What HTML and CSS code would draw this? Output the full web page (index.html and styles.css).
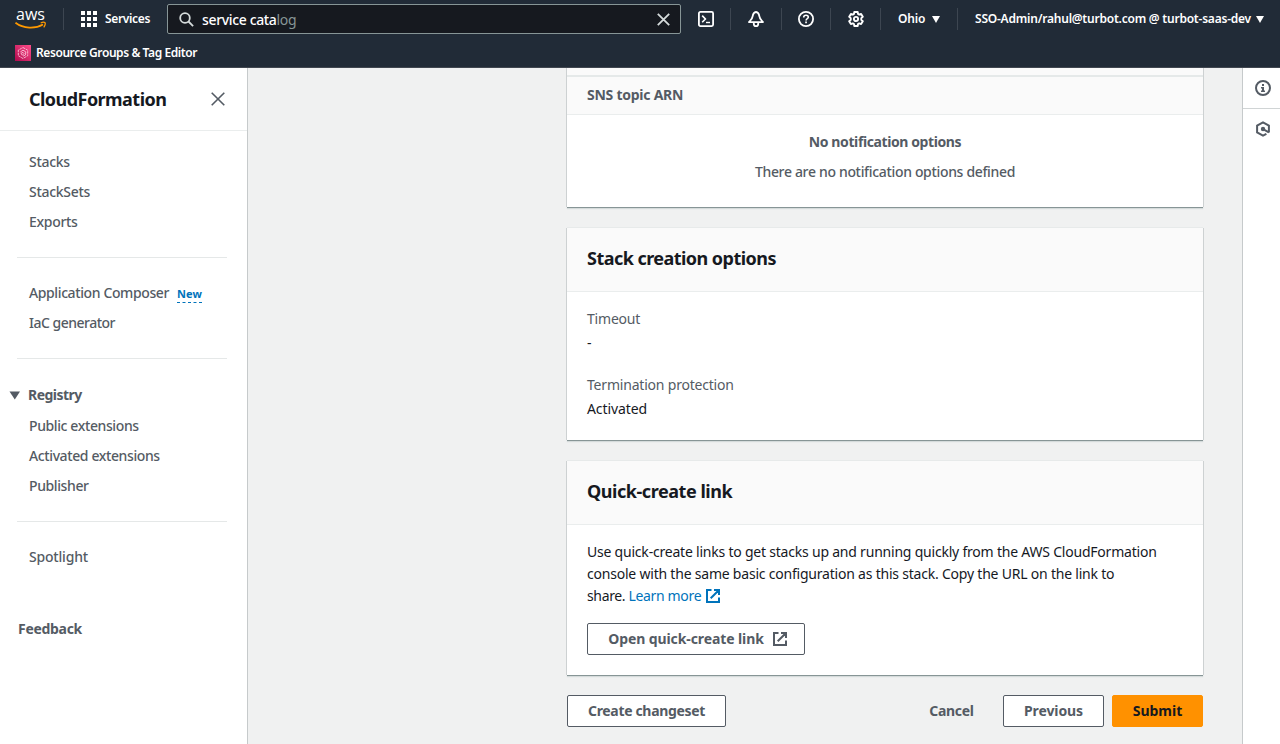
FILE: index.html
```html
<!DOCTYPE html>
<html lang="en">
<head>
<meta charset="utf-8">
<title>CloudFormation</title>
<link rel="stylesheet" href="styles.css">
</head>
<body>
<header class="topbar">
  <div class="topbar-row">
    <svg class="aws-logo" width="32" height="32" viewBox="0 0 32 32">
      <text class="aws-word" x="1" y="17" textLength="29" lengthAdjust="spacingAndGlyphs">aws</text>
      <path d="M.5 19.700C8.500 25.800 20 26.200 28 21.500" fill="none" stroke="#f90" stroke-width="1.700"/>
      <path d="M25.700 20c1.400-.7 3.700-.8 4.400-.2.5.7-.2 3.400-1.400 4.600" fill="none" stroke="#f90" stroke-width="1.300"/>
    </svg>
    <span class="sep sep-logo"></span>
    <svg class="grid-icon" width="16" height="16" fill="#fff"><path d="M0 0h4v4H0zM6 0h4v4H6zM12 0h4v4h-4zM0 6h4v4H0zM6 6h4v4H6zM12 6h4v4h-4zM0 12h4v4H0zM6 12h4v4H6zM12 12h4v4h-4z"/></svg>
    <span class="services">Services</span>
    <div class="search">
      <svg class="search-icon" width="15" height="15" viewBox="0 0 15 15" fill="none" stroke="#d5dbdb" stroke-width="1.8"><circle cx="6" cy="6" r="4.8"/><path d="M9.5 9.5l4.6 4.6"/></svg>
      <span class="query">service cata<span class="hint">log</span></span>
      <svg width="13" height="13" viewBox="0 0 13 13" stroke="#d5dbdb" stroke-width="1.8"><path d="M.8.8l11.4 11.4M12.2.8L.8 12.2"/></svg>
    </div>
    <div class="tool"><svg width="16" height="16" viewBox="0 0 16 16" fill="none" stroke="#fff" stroke-width="1.8"><rect x=".9" y=".9" width="14.2" height="14.2" rx="1.5"/><path d="M4.2 4.6L7.4 8l-3.2 3.3" stroke-width="1.6"/><path d="M8 11.5h4" stroke-width="1.4"/></svg></div>
    <div class="tool tool-bell"><svg width="16" height="16" viewBox="0 0 16 16" fill="none" stroke="#fff" stroke-width="1.8" stroke-linejoin="round"><path d="M8 1C6 1.2 5 3 4.6 5.4 4.3 8 2.5 9.2 1 11.1h14c-1.5-1.9-3.3-3.1-3.6-5.7C11 3 10 1.200 8 1z"/><path d="M5.800 11.500v1.400q0 2.200 2.200 2.200t2.200-2.200v-1.400"/></svg></div>
    <div class="tool tool-help"><svg width="16" height="16" viewBox="0 0 16 16" fill="none" stroke="#fff" stroke-width="1.8"><circle cx="8" cy="8" r="7.1"/><path d="M5.700 6.500q0-2.200 2.300-2.200t2.300 1.900c0 1.500-2.200 1.300-2.200 3.200" stroke-width="1.6"/><path d="M7.200 10.500h1.700v1.700H7.200z" fill="#fff" stroke="none"/></svg></div>
    <div class="tool"><svg width="16" height="16" viewBox="0 0 16 16" fill="none" stroke="#fff" stroke-width="1.9" stroke-linejoin="round"><path d="M6.300 1h3.400l.3 1.900 1.200.7 1.900-.7 1.700 2.900-1.500 1.300v1.800l1.500 1.300-1.700 2.900-1.900-.7-1.200.7L9.700 15H6.300L6 13.100l-1.200-.7-1.900.7-1.700-2.900 1.500-1.300V7.100L1.200 5.800l1.700-2.900 1.900.7L6 2.900z"/><circle cx="8" cy="8" r="2.100"/></svg></div>
    <div class="region"><span>Ohio</span><svg width="8" height="7" fill="#fff"><path d="M0 0h8L4 7z"/></svg></div>
    <div class="account"><span>SSO-Admin/rahul@turbot.com @ turbot-saas-dev</span><svg width="8" height="7" fill="#fff"><path d="M0 0h8L4 7z"/></svg></div>
  </div>
  <div class="favorites">
    <svg width="16" height="16" viewBox="0 0 16 16"><defs><linearGradient id="pink" x1="0" y1="1" x2="1" y2="0"><stop offset="0" stop-color="#b0084d"/><stop offset="1" stop-color="#ff4f8b"/></linearGradient></defs><path fill="url(#pink)" d="M0 0h16v16H0z"/><g fill="none" stroke="#ffd7e6" stroke-width=".8"><path d="M8 2.500l4.700 2.700v5.500L8 13.500l-4.700-2.800V5.200z" stroke-dasharray="2.500 .7"/><path d="M5.300 7L8 5.200l2.800 1.700-.3 3L8 11.200M6 8.300l2-.9 1 1.200-1.700 1.700z"/></g></svg>
    <span>Resource Groups &amp; Tag Editor</span>
  </div>
</header>
<div class="page">
  <nav class="sidebar">
    <div class="sidebar-head"><h2>CloudFormation</h2><svg width="14" height="14" viewBox="0 0 14 14" stroke="#545b64" stroke-width="1.6"><path d="M.7.7l12.600 12.600M13.300.7L.7 13.300"/></svg></div>
    <ul class="links links-top"><li>Stacks</li><li>StackSets</li><li>Exports</li></ul>
    <ul class="links"><li><span>Application Composer</span><span class="new">New</span></li><li class="tight">IaC generator</li></ul>
    <div class="registry"><svg width="11" height="9" fill="#545b64"><path d="M.5.500H11L5.800 8.500z"/></svg><span>Registry</span></div>
    <ul class="links links-registry"><li>Public extensions</li><li>Activated extensions</li><li>Publisher</li></ul>
    <ul class="links links-last"><li>Spotlight</li></ul>
    <div class="feedback">Feedback</div>
  </nav>
  <main class="main">
    <section class="card card-notify">
      <div class="strip"></div>
      <div class="column-head"><span>SNS topic ARN</span></div>
      <div class="empty"><b>No notification options</b><span>There are no notification options defined</span></div>
    </section>
    <section class="card card-options">
      <h3>Stack creation options</h3>
      <dl><dt>Timeout</dt><dd>-</dd><dt>Termination protection</dt><dd>Activated</dd></dl>
    </section>
    <section class="card card-quick">
      <h3>Quick-create link</h3>
      <div class="quick-body">
        <p>Use quick-create links to get stacks up and running quickly from the AWS CloudFormation<br>console with the same basic configuration as this stack. Copy the URL on the link to<br><span class="share">share. <a>Learn more</a></span><svg class="ext" width="14" height="14" viewBox="0 0 14 14" fill="none" stroke="#0073bb" stroke-width="2"><path d="M5.500 1H1v12h12V8.500M8 1h5v5M13 1L4.700 9.300"/></svg></p>
        <button class="btn btn-open"><span>Open quick-create link</span><svg width="14" height="14" viewBox="0 0 14 14" fill="none" stroke="#545b64" stroke-width="2"><path d="M5.500 1H1v12h12V8.500M8 1h5v5M13 1L4.700 9.300"/></svg></button>
      </div>
    </section>
    <div class="actions">
      <button class="btn btn-change">Create changeset</button>
      <button class="btn btn-cancel">Cancel</button>
      <button class="btn btn-prev">Previous</button>
      <button class="btn btn-submit">Submit</button>
    </div>
  </main>
  <aside class="rail">
    <div class="rail-item"><svg width="16" height="16" viewBox="0 0 16 16" fill="none" stroke="#545b64" stroke-width="2"><circle cx="8" cy="8" r="7"/><path d="M7 4h2v2H7zM6 7h3v3.500h1V12H6v-1.500h1V8.500H6z" fill="#545b64" stroke="none"/></svg></div>
    <div class="rail-item rail-second"><svg width="16" height="16" viewBox="0 0 16 16" fill="none" stroke="#545b64" stroke-width="2"><path d="M13.900 11.500V4.700L8 1.300 2.100 4.700v6.600L8 14.700l3.400-1.900" /><circle cx="8" cy="8" r="2.200" fill="#545b64" stroke="none"/><path d="M8.500 8.300l5.400 3.100"/></svg></div>
  </aside>
</div>
</body>
</html>
```
FILE: styles.css
```css
* { box-sizing: border-box; }
body { margin: 0; width: 1280px; height: 744px; overflow: hidden; font: 14px/22px "Noto Sans", sans-serif; color: #16191f; background: #f0f1f1; }
h2, h3, p, ul, dl, dd { margin: 0; padding: 0; }
ul { list-style: none; }
svg { display: block; flex: none; }
span, b, li { white-space: nowrap; }

.topbar { height: 68px; background: #212b37; border-bottom: 1px solid #414750; color: #fff; font-size: 12px; font-weight: 600; }
.topbar-row { height: 38px; display: flex; align-items: center; }
.aws-logo { margin-left: 15px; }
.aws-word { font: 500 17px "Open Sans", sans-serif; fill: #fff; }
.sep { width: 1px; height: 22px; background: #3d4651; }
.sep-logo { margin: 0 17px 0 16px; }
.services { width: 45px; margin: 0 17px 0 8px; letter-spacing: -.35px; }
.search { width: 514px; height: 30px; display: flex; align-items: center; padding: 0 10px 0 11px; background: #16191f; border: 1px solid #879596; border-radius: 2px; font-size: 14px; font-weight: 500; }
.query { flex: 1; margin-left: 8px; padding-top: 1px; letter-spacing: -.35px; }
.hint { color: #879596; font-weight: 400; }
.tool { width: 50px; height: 22px; display: flex; align-items: center; justify-content: center; border-right: 1px solid #3d4651; }
.tool-bell { width: 51px; }
.tool-help { width: 49px; }
.region { width: 77px; height: 22px; display: flex; align-items: center; gap: 7px; padding-left: 17px; border-right: 1px solid #3d4651; letter-spacing: -.2px; }
.account { display: flex; align-items: center; gap: 5px; padding-left: 17px; }
.account span { width: 276px; letter-spacing: -.22px; }
.favorites { display: flex; align-items: center; gap: 5px; height: 29px; padding-left: 15px; font-size: 12px; letter-spacing: -.42px; }

.page { display: flex; height: 676px; }
.sidebar { width: 248px; background: #fff; border-right: 1px solid #c6cacb; color: #545b64; font-weight: 500; }
.sidebar-head { height: 63px; display: flex; align-items: center; justify-content: space-between; padding: 0 22px 0 29px; border-bottom: 1px solid #eaeded; }
h2, h3 { font-size: 18px; line-height: 22px; font-weight: 700; color: #16191f; letter-spacing: -.54px; }
.links { margin: 0 20px 0 17px; padding: 20px 0 20px 12px; border-bottom: 1px solid #e5e8e8; }
.links li { height: 30px; line-height: 30px; letter-spacing: -.39px; display: flex; }
.links .tight { letter-spacing: -.5px; }
.links-top { padding-top: 16px; }
.links-top li, .links-last li { letter-spacing: -.3px; }
.new { margin-left: 8px; height: 17px; margin-top: 8px; line-height: 16px; font-size: 11px; font-weight: 700; color: #0073bb; border-bottom: 1px dashed #0073bb; letter-spacing: .1px; }
.registry { display: flex; align-items: center; gap: 8px; height: 22px; margin-top: 25px; padding-left: 9px; font-weight: 700; letter-spacing: -.52px; }
.links-registry { padding-top: 5px; }
.links-last { border: 0; padding-bottom: 0; }
.links-last li { letter-spacing: -.2px; }
.feedback { margin: 46px 0 0 18px; font-weight: 700; letter-spacing: -.3px; }

.main { width: 994px; padding-left: 319px; }
.card { width: 636px; background: #fff; box-shadow: -1px 0 #cdd1d2, 1px 0 #cdd1d2, 0 -1px #e7eaea, 0 1px #879596, 0 2px 1px #d5dbdb; }
.card-notify { height: 139px; clip-path: inset(0 -2px -4px -2px); }
.strip { height: 9px; background: #fafafa; border-bottom: 2px solid #e5e9e9; }
.column-head { height: 38px; padding: 7px 20px; background: #fafafa; border-bottom: 1px solid #eaeded; font-weight: 700; color: #545b64; letter-spacing: -.25px; }
.empty { display: flex; flex-direction: column; align-items: center; padding-top: 16px; gap: 8px; color: #545b64; font-weight: 500; letter-spacing: -.33px; }
.empty b { font-weight: 700; letter-spacing: -.4px; }
.card-options { height: 212px; margin-top: 21px; }
.card h3 { height: 64px; padding: 19px 20px 21px; background: #fafafa; border-bottom: 1px solid #eaeded; }
.card-quick h3 { letter-spacing: -.45px; }
dl { padding: 16px 20px; letter-spacing: -.2px; }
dt { color: #545b64; }
dd { margin-top: 2px; margin-bottom: 20px; letter-spacing: -.1px; }
.card-quick { height: 214px; margin-top: 21px; }
.quick-body { padding: 16px 20px; letter-spacing: -.213px; }
.share { letter-spacing: -.35px; }
a { color: #0073bb; }
.ext { display: inline-block; margin-left: 5px; vertical-align: -2px; }
.btn { height: 32px; display: flex; align-items: center; justify-content: center; padding: 0 0 2px; background: #fff; border: 1px solid #545b64; border-radius: 2px; color: #545b64; font: 700 14px "Noto Sans", sans-serif; white-space: nowrap; }
.btn-open { width: 218px; gap: 9px; margin-top: 16px; padding-left: 3px; letter-spacing: -.1px; }
.btn-open svg { margin-top: 1px; }
.actions { display: flex; width: 636px; margin-top: 20px; }
.btn-change { width: 159px; margin-right: auto; letter-spacing: -.33px; }
.btn-cancel { width: 87px; margin-right: 8px; background: none; border-color: transparent; letter-spacing: -.3px; }
.btn-prev { width: 101px; margin-right: 8px; letter-spacing: -.1px; }
.btn-submit { width: 91px; background: #ff9100; border-color: #ff9100; color: #16191f; }

.rail { width: 38px; background: #fff; border-left: 1px solid #c6cacb; }
.rail-item { height: 41px; display: flex; align-items: center; justify-content: center; padding-left: 3px; border-bottom: 1px solid #d0d4d5; }
.rail-second { height: 40px; border: 0; }
```
